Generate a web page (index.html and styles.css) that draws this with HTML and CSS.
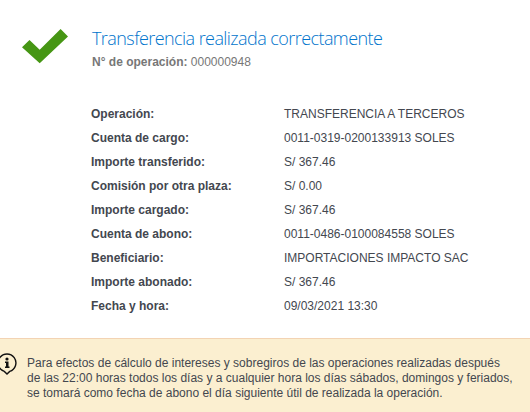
FILE: index.html
```html
<!DOCTYPE html>
<html lang="es">
<head>
    <meta charset="UTF-8">
    <meta name="viewport" content="width=device-width, initial-scale=1.0">
    <title>Transferencia realizada</title>
    <link rel="stylesheet" href="styles.css">
</head>
<body>

<header class="cabecera">
    <svg class="icono-ok" width="48" height="36" viewBox="0 0 48 36">
        <path d="M1 19.3 L8.5 12 L18.7 21.7 L39.6 1 L47 8.6 L18.7 35.2 Z" fill="#469614"/>
    </svg>
    <div>
        <h1>Transferencia realizada correctamente</h1>
        <p class="numero"><strong>N° de operación:</strong> 000000948</p>
    </div>
</header>

<main>
    <!-- Detalle de la operación -->
    <dl class="detalle">
        <dt>Operación:</dt>
        <dd>TRANSFERENCIA A TERCEROS</dd>
        <dt>Cuenta de cargo:</dt>
        <dd>0011-0319-0200133913 SOLES</dd>
        <dt>Importe transferido:</dt>
        <dd>S/ 367.46</dd>
        <dt>Comisión por otra plaza:</dt>
        <dd>S/ 0.00</dd>
        <dt>Importe cargado:</dt>
        <dd>S/ 367.46</dd>
        <dt>Cuenta de abono:</dt>
        <dd>0011-0486-0100084558 SOLES</dd>
        <dt>Beneficiario:</dt>
        <dd>IMPORTACIONES IMPACTO SAC</dd>
        <dt>Importe abonado:</dt>
        <dd>S/ 367.46</dd>
        <dt>Fecha y hora:</dt>
        <dd>09/03/2021 13:30</dd>
    </dl>
</main>

<section class="aviso">
    <svg class="icono-info" width="20" height="23" viewBox="0 0 20 23">
        <path d="M7.3 18.4 A8.9 8.9 0 1 1 12.7 18.4 L10 21 Z" fill="none" stroke="#111" stroke-width="1.4"/>
        <circle cx="10" cy="6" r="1.6" fill="#111"/>
        <path d="M8 8.5 H11.5 V13.5 H12.5 V15 H8 V13.5 H9 V10 H8 Z" fill="#111"/>
    </svg>
    <p>Para efectos de cálculo de intereses y sobregiros de las operaciones realizadas después<br>
    de las 22:00 horas todos los días y a cualquier hora los días sábados, domingos y feriados,<br>
    se tomará como fecha de abono el día siguiente útil de realizada la operación.</p>
</section>

</body>
</html>
```
FILE: styles.css
```css
/* Estilos generales */
body {
    font-family: "Liberation Sans", Arial, sans-serif;
    font-size: 12px;
    margin: 0;
    padding: 0;
    height: 412px;
    overflow: hidden;
    display: flex;
    flex-direction: column;
    background-color: #fff;
    color: #43474f;
}

.cabecera {
    display: flex;
    gap: 23px;
    height: 74px;
    padding: 28px 0 0 21px;
}

.icono-ok {
    flex: none;
}

.cabecera h1 {
    margin: -4px 0 0;
    font-family: "Open Sans", sans-serif;
    font-size: 18px;
    font-weight: 300;
    line-height: 28px;
    letter-spacing: -0.57px;
    color: #0074cc;
    white-space: nowrap;
}

.numero {
    margin: 2px 0 0;
    line-height: 16px;
    color: #777;
}

.detalle {
    display: grid;
    grid-template-columns: 193px 1fr;
    margin: 0;
    padding-left: 91px;
    line-height: 24px;
}

.detalle dt {
    font-weight: bold;
}

.detalle dd {
    margin: 0;
}

/* Aviso inferior */
.aviso {
    display: flex;
    flex: 1;
    gap: 10px;
    margin-top: 20px;
    border-top: 1px solid #f3d3b3;
    background-color: #fbefd0;
}

.icono-info {
    flex: none;
    margin: 14px 0 0 -3px;
}

.aviso p {
    margin: 17px 0 0;
    line-height: 15px;
    white-space: nowrap;
}
```
